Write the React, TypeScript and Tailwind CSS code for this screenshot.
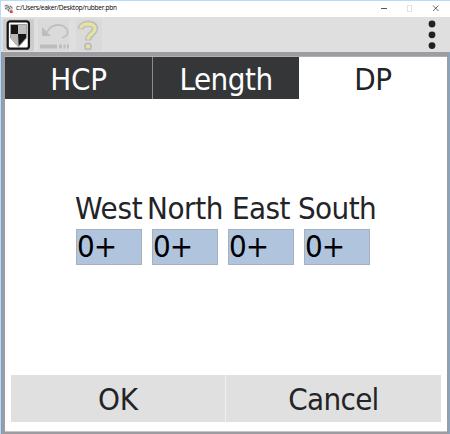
import React from 'react';

const seats = [
  { name: 'West', label: '-ml-px tracking-[-0.2px]' },
  { name: 'North', label: '-ml-[5px] tracking-[-0.4px]' },
  { name: 'East', label: 'ml-[4px] tracking-[-0.6px]' },
  { name: 'South', label: '-ml-[6px] tracking-[-0.6px]' },
];

function HandIcon() {
  return (
    <svg width="10" height="10" viewBox="0 0 10 10">
      <path d="M0.5 2 L4 0.5 L8.5 2.5 L8.5 7 L6 8.5 L1 5Z" fill="#d0d0d0" />
      <path d="M0.8 2 L3 1 M1 5 L3.5 3.5 M3.5 1.5 L6 5 M6 2 L8.5 4 M4 5 L5 7.5" stroke="#686868" strokeWidth="1" />
      <rect x="6" y="6.5" width="2.7" height="2.6" fill="#e64040" />
    </svg>
  );
}

function ShieldIcon() {
  return (
    <svg width="31" height="32" viewBox="0 0 31 32">
      <rect width="31" height="32" fill="#cdcdcd" />
      <rect x="4.7" y="2.3" width="21.2" height="27.4" rx="2.5" fill="#fff" stroke="#161616" strokeWidth="2.3" />
      <path d="M7.5 5.5h16v13.5L15.5 28L7.5 19Z" fill="#f4f4f4" stroke="#8c8c8c" strokeWidth="0.8" />
      <path d="M8 6h7v9H8Z" fill="#161616" />
      <path d="M15 15h8v4L15.5 27.3Z" fill="#161616" />
      <path d="M8 15h7v12L8 19Z" fill="#b8b8b8" />
      <path d="M15 6h8v9h-8Z" fill="#bdbdbd" />
    </svg>
  );
}

function UndoIcon() {
  return (
    <svg width="31" height="32" viewBox="0 0 31 32">
      <rect width="31" height="32" fill="#dadada" />
      <path d="M9 13C12 7 17 5.5 22 6C28 7 31 12 29 15.5C28 17.5 26 18.5 24 18.5" fill="none" stroke="#bdbdbd" strokeWidth="1.6" />
      <path d="M4 8v9h9Z" fill="#bdbdbd" />
      <path d="M2 25.5h17v4H2ZM21 25.5h3v4h-3ZM25.5 25.5h2v4h-2ZM29 25.5h2v4h-2Z" fill="#bdbdbd" />
    </svg>
  );
}

function HelpIcon() {
  return (
    <svg width="26" height="32" viewBox="0 0 26 32">
      <rect width="26" height="32" fill="#dadada" />
      <path d="M4.5 10C5.5 3.2 19.5 2.7 19 9.8C19 14.5 12 15 12 21.5" fill="none" stroke="#bcbcb9" strokeWidth="6.2" />
      <circle cx="12" cy="27.4" r="3.9" fill="#bcbcb9" />
      <path d="M4.5 9.3C6 3.7 19 3.2 19 9.8C19 14.5 12 15 12 20.5" fill="none" stroke="#e6e2a2" strokeWidth="3.3" />
      <circle cx="12" cy="27.4" r="2.2" fill="#e6e2a2" />
    </svg>
  );
}

export default function App() {
  return (
    <div className="flex h-[434px] w-[450px] flex-col overflow-hidden border-l border-t border-[#b9dcfa] bg-[#9c9ca1] font-['DejaVu_Sans_Condensed','DejaVu_Sans',sans-serif] text-[31px] leading-none text-[#222427] [font-stretch:condensed]">
      <header className="flex h-4 shrink-0 items-center bg-white pl-[3px]">
        <div className="-mt-px"><HandIcon /></div>
        <span className="-mt-[2px] ml-[2px] whitespace-nowrap font-['Open_Sans',sans-serif] text-[6.6px] tracking-[-0.27px] text-black [font-stretch:normal]">c:/Users/eaker/Desktop/rubber.pbn</span>
        <svg className="-mt-[2px] ml-auto mr-[9px]" width="62" height="10" viewBox="0 0 62 10" fill="none">
          <path d="M2 5.5h6" stroke="#555" />
          <rect x="28.5" y="2.5" width="4" height="6" stroke="#e2e2e2" />
          <path d="M54 2.5l5.5 5.5m0-5.5l-5.5 5.5" stroke="#444" strokeWidth="0.8" />
        </svg>
      </header>
      <div className="flex h-[35px] shrink-0 items-center bg-[#dfdfdf] pl-[2px]">
        <ShieldIcon />
        <div className="ml-1"><UndoIcon /></div>
        <div className="ml-[7px]"><HelpIcon /></div>
        <svg className="ml-auto mr-[14px]" width="8" height="30" viewBox="0 0 8 30" fill="#202020">
          <circle cx="4" cy="4" r="3.4" />
          <circle cx="4" cy="14.8" r="3.4" />
          <circle cx="4" cy="25.6" r="3.4" />
        </svg>
      </div>
      <div className="flex grow border-r border-[#7eaad5] bg-[#9c9ca1]">
        <div className="w-1 shrink-0 border-l border-[#819dbd]" />
        <main className="mr-[2px] mt-[4px] flex h-[376px] grow flex-col border-b border-[#c6c6c6] bg-white">
          <div className="grid h-[43px] shrink-0 grid-cols-[148px_146px_1fr] border-t border-[#b0b0b2]">
            <div className="flex items-center justify-center border-r border-[#8a8b8d] bg-[#343638] text-white"><span className="relative top-px tracking-[-0.3px]">HCP</span></div>
            <div className="flex items-center justify-center bg-[#343638] text-white"><span className="relative top-px tracking-[-0.5px]">Length</span></div>
            <div className="flex items-center justify-center"><span className="relative top-px tracking-[-0.5px]">DP</span></div>
          </div>
          <div className="ml-[71px] mt-[92px] grid grid-cols-[66px_66px_66px_66px] gap-x-[10px]">
            {seats.map((seat) => (
              <div key={seat.name}>
                <div className={`h-[38px] whitespace-nowrap leading-[34px] ${seat.label}`}>{seat.name}</div>
                <div className="h-[36px] w-[66px] border border-[#a7b0bc] bg-[#b0c4de] leading-[33px] tracking-[-1px] text-black">0+</div>
              </div>
            ))}
          </div>
          <div className="mx-[6px] mb-[9px] mt-auto grid h-[47px] shrink-0 grid-cols-2 bg-[#e0e0e0]">
            <div className="flex items-center justify-center border-r border-[#efefef]"><span className="relative top-px">OK</span></div>
            <div className="flex items-center justify-center"><span className="relative top-px tracking-[-0.7px]">Cancel</span></div>
          </div>
        </main>
      </div>
    </div>
  );
}
